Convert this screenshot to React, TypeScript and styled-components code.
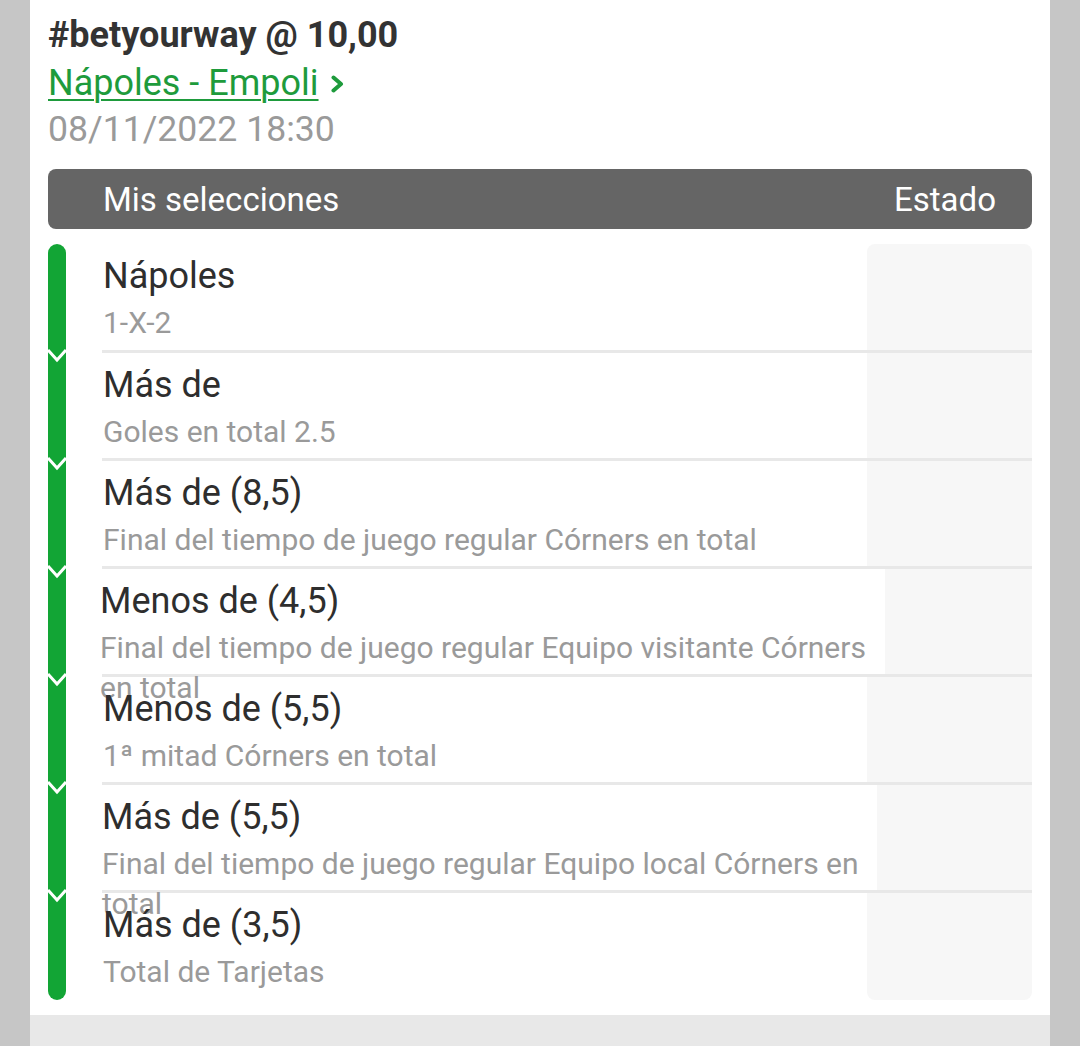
import React from "react";
import styled, { createGlobalStyle } from "styled-components";

const GlobalStyle = createGlobalStyle`
  html, body {
    margin: 0;
    padding: 0;
    background: #c6c6c6;
    font-family: Roboto, "Noto Sans", sans-serif;
  }
`;

const Page = styled.div`
  margin: 0 30px;
  min-height: 1046px;
  display: flex;
  flex-direction: column;
  background: #e8e8e8;
`;

const Card = styled.div`
  background: #fff;
  padding: 12px 18px 15px 18px;
  display: flex;
  flex-direction: column;
`;

const Title = styled.div`
  font-size: 36px;
  line-height: 46px;
  font-weight: 700;
  color: #333;
`;

const MatchLink = styled.a`
  display: flex;
  align-items: center;
  gap: 12px;
  margin-top: 2px;
  font-size: 36px;
  line-height: 46px;
  color: #1e9b3c;
  text-decoration: none;
  cursor: pointer;
  span {
    text-decoration: underline;
    text-decoration-thickness: 2px;
    text-underline-offset: 4px;
  }
  svg {
    margin-top: 2px;
  }
`;

const DateText = styled.div`
  font-size: 35.6px;
  line-height: 46px;
  color: #9a9a9a;
`;

const HeaderBar = styled.div`
  margin-top: 17px;
  height: 60px;
  background: #656565;
  border-radius: 8px;
  display: flex;
  align-items: center;
  justify-content: space-between;
  padding: 0 36px 0 55px;
  color: #fff;
  font-size: 33px;
`;

const List = styled.div`
  margin-top: 15px;
  display: flex;
  flex-direction: column;
`;

const Row = styled.div<{ $first: boolean; $last: boolean }>`
  display: flex;
  height: ${(p) => (p.$first ? 106 : p.$last ? 110 : 108)}px;
`;

const Marker = styled.div<{ $first: boolean; $last: boolean }>`
  position: relative;
  width: 18px;
  flex: none;
  background: #12a535;
  border-radius: ${(p) => (p.$first ? "9px 9px" : "0 0")} ${(p) => (p.$last ? "9px 9px" : "0 0")};
  svg {
    position: absolute;
    top: -2px;
    left: 0;
  }
`;

const Body = styled.div<{ $first: boolean }>`
  flex: 1;
  display: flex;
  margin-left: 36px;
  border-top: ${(p) => (p.$first ? "none" : "3px solid #e8e8e8")};
`;

const Texts = styled.div<{ $shift: number }>`
  flex: 1;
  min-width: 0;
  padding: 12px 12px 0 0;
  margin-left: ${(p) => 1 - p.$shift}px;
  position: relative;
  z-index: 1;
`;

const SelName = styled.div`
  font-size: 36px;
  line-height: 40px;
  color: #2e2e2e;
`;

const Market = styled.div`
  margin-top: 7px;
  font-size: 30px;
  line-height: 40px;
  color: #9a9a9a;
`;

const Status = styled.div<{ $w: number; $first: boolean; $last: boolean }>`
  width: ${(p) => p.$w}px;
  flex: none;
  background: #f7f7f7;
  border-radius: ${(p) => (p.$first ? "8px 8px" : "0 0")} ${(p) => (p.$last ? "8px 8px" : "0 0")};
`;

const Footer = styled.div`
  flex: 1;
  background: #e8e8e8;
`;

const selections = [
  { name: "Nápoles", market: "1-X-2", status: 165, shift: 0 },
  { name: "Más de", market: "Goles en total 2.5", status: 165, shift: 0 },
  { name: "Más de (8,5)", market: "Final del tiempo de juego regular Córners en total", status: 165, shift: 0 },
  {
    name: "Menos de (4,5)",
    market: "Final del tiempo de juego regular Equipo visitante Córners en total",
    status: 147,
    shift: 3,
  },
  { name: "Menos de (5,5)", market: "1ª mitad Córners en total", status: 165, shift: 0 },
  {
    name: "Más de (5,5)",
    market: "Final del tiempo de juego regular Equipo local Córners en total",
    status: 155,
    shift: 1,
  },
  { name: "Más de (3,5)", market: "Total de Tarjetas", status: 165, shift: 0 },
];

const Chevron = () => (
  <svg width="13" height="18" viewBox="0 0 13 18">
    <polyline points="2.5,2.5 10,9 2.5,15.5" fill="none" stroke="#1e9b3c" strokeWidth="4" strokeLinecap="round" strokeLinejoin="round" />
  </svg>
);

const Notch = () => (
  <svg width="18" height="15" viewBox="0 0 18 15">
    <polyline points="0,2 9,12 18,2" fill="none" stroke="#fff" strokeWidth="3" />
  </svg>
);

export default function App() {
  return (
    <>
      <GlobalStyle />
      <Page>
        <Card>
          <Title>#betyourway @ 10,00</Title>
          <MatchLink>
            <span>Nápoles - Empoli</span>
            <Chevron />
          </MatchLink>
          <DateText>08/11/2022 18:30</DateText>
          <HeaderBar>
            <span>Mis selecciones</span>
            <span>Estado</span>
          </HeaderBar>
          <List>
            {selections.map((s, i) => {
              const first = i === 0;
              const last = i === selections.length - 1;
              return (
                <Row key={i} $first={first} $last={last}>
                  <Marker $first={first} $last={last}>
                    {!first && <Notch />}
                  </Marker>
                  <Body $first={first}>
                    <Texts $shift={s.shift}>
                      <SelName>{s.name}</SelName>
                      <Market>{s.market}</Market>
                    </Texts>
                    <Status $w={s.status} $first={first} $last={last} />
                  </Body>
                </Row>
              );
            })}
          </List>
        </Card>
        <Footer />
      </Page>
    </>
  );
}
